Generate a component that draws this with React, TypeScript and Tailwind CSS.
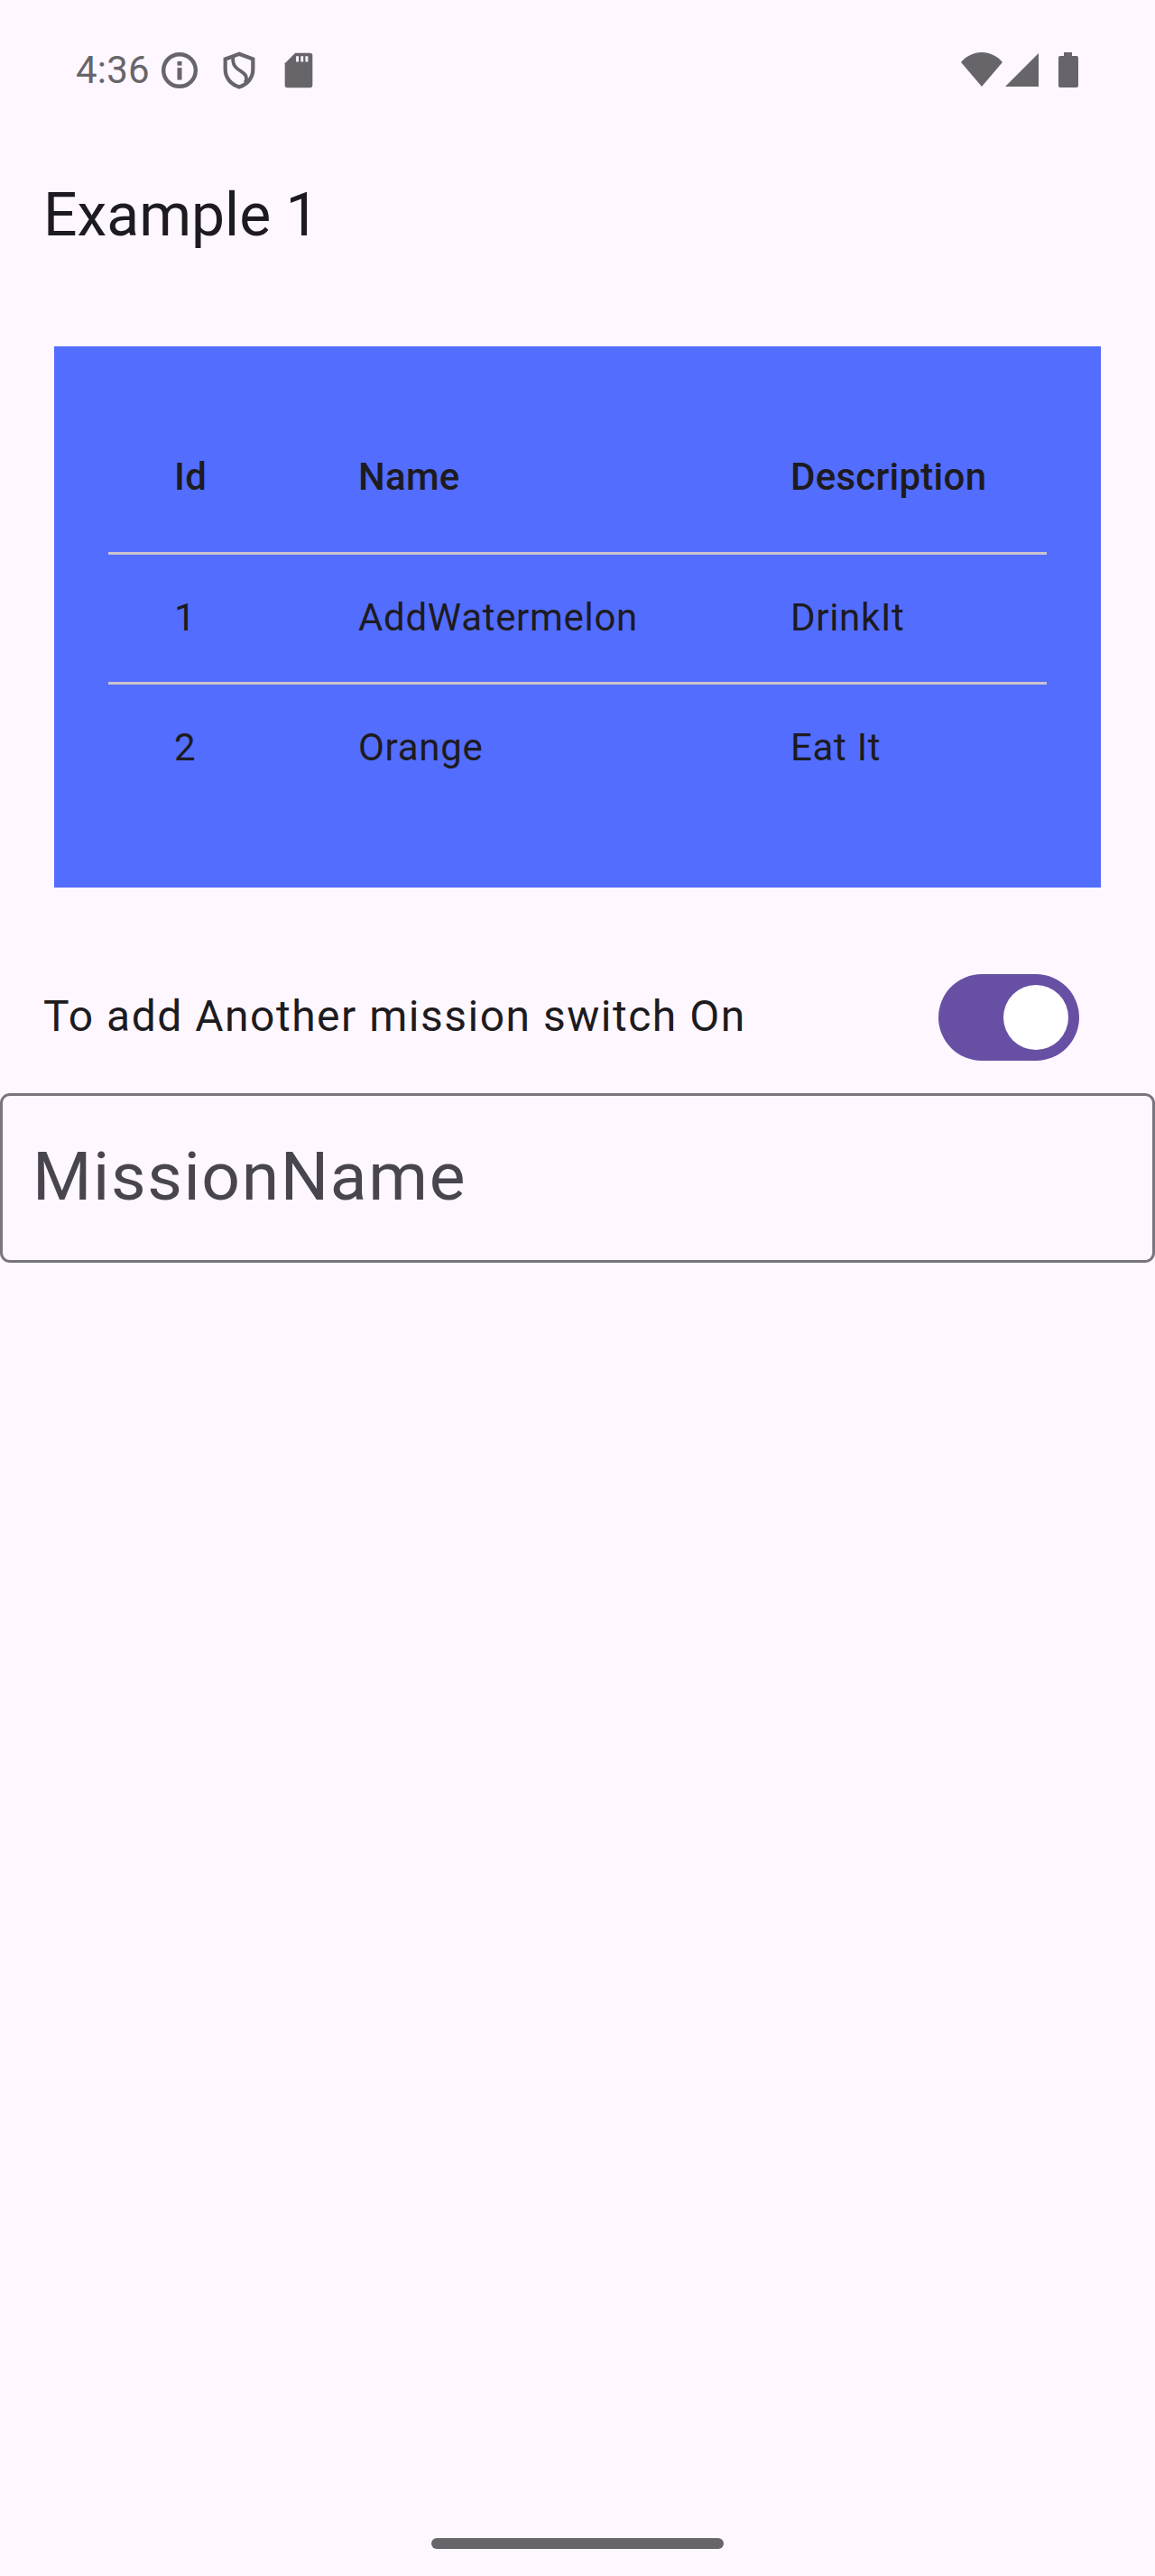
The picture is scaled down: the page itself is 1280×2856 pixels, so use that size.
const Cell = ({ className = "", children }: { className?: string; children: React.ReactNode }) => (
  <div className={className}>{children}</div>
);

const rows = [
  { id: "1", name: "AddWatermelon", description: "DrinkIt" },
  { id: "2", name: "Orange", description: "Eat It" },
];

function StatusBar() {
  return (
    <div className="flex h-[72px] mt-[42px] items-center justify-between pl-[84px] pr-[84px] text-[#67656a]">
      <div className="flex items-center">
        <span className="text-[42px] leading-none w-[92px] tracking-[0.2px]">4:36</span>
        <svg viewBox="0 0 24 24" className="w-[46px] h-[46px]" fill="none">
          <circle cx="12" cy="12" r="9.300" stroke="currentColor" strokeWidth="2.300" />
          <rect x="10.700" y="10.500" width="2.600" height="7" fill="currentColor" />
          <rect x="10.700" y="6.800" width="2.600" height="2.400" fill="currentColor" />
        </svg>
        <svg viewBox="0 0 24 24" className="ml-[20px] w-[46px] h-[46px]" fill="none" stroke="currentColor" strokeWidth="2.200">
          <path d="M12 2.500 20 5.500v6c0 4.800-3.200 8.600-8 10.200-4.800-1.600-8-5.400-8-10.200v-6z" />
          <path d="M8.500 4C8 9 10 10.500 13 12.500c3 2 4 3.500 2.500 6.500" strokeWidth="2" />
        </svg>
        <svg viewBox="0 0 24 24" className="ml-[20px] w-[46px] h-[46px]" fill="currentColor">
          <path d="M10 2h8.500A1.500 1.500 0 0 1 20 3.500v17a1.500 1.500 0 0 1-1.500 1.500h-13A1.500 1.500 0 0 1 4 20.500V8z" />
          <path d="M10.500 3.800h1.500v3.200h-1.500zM13.200 3.800h1.500v3.200h-1.500zM15.900 3.800h1.500v3.200h-1.500z" fill="#fef7ff" />
        </svg>
      </div>
      <div className="flex items-center">
        <svg viewBox="0 0 46 40" className="w-[46px] h-[40px]" fill="currentColor">
          <path d="M0 11C6 4 14 0 23 0s17 4 23 11L23 38z" />
        </svg>
        <svg viewBox="0 0 38 38" className="ml-[3px] w-[38px] h-[38px]" fill="currentColor">
          <path d="M37 0v37H0z" />
        </svg>
        <svg viewBox="0 0 24 40" className="ml-[20px] w-[24px] h-[40px]" fill="currentColor">
          <path d="M7 0h9v4h5a2 2 0 0 1 2 2v31a2 2 0 0 1-2 2H3a2 2 0 0 1-2-2V6a2 2 0 0 1 2-2h4z" />
        </svg>
      </div>
    </div>
  );
}

export default function App() {
  return (
    <div
      className="w-[1280px] h-[2856px] bg-[#fef7ff] flex flex-col text-[#1d1b20] overflow-hidden"
      style={{ fontFamily: "Roboto, sans-serif" }}
    >
      <StatusBar />
      <div className="mt-[84px] pl-[48px] pt-[2px] h-[80px] flex items-center text-[66px] leading-none">Example 1</div>

      {/* Table */}
      <div className="mt-[106px] mx-[60px] h-[600px] bg-[#536dfe] px-[60px] pt-[60px]">
        <div className="h-[171px] border-b-[3px] border-[#cac4d0] flex items-center pl-[73px] text-[42px] font-medium tracking-[0.25px]">
          <Cell className="w-[204px]">Id</Cell>
          <Cell className="w-[479px]">Name</Cell>
          <Cell>Description</Cell>
        </div>
        {rows.map((row, i) => (
          <div
            key={row.id}
            className={`h-[144px] flex items-center pl-[73px] text-[42px] tracking-[0.7px] ${
              i === 0 ? "border-b-[3px] border-[#cac4d0] pb-[3px]" : "pb-[6px]"
            }`}
          >
            <Cell className="w-[204px]">{row.id}</Cell>
            <Cell className="w-[479px]">{row.name}</Cell>
            <Cell>{row.description}</Cell>
          </div>
        ))}
      </div>

      {/* Switch row */}
      <div className="mt-[96px] pl-[48px] pr-[84px] h-[96px] flex items-center justify-between">
        <span className="text-[48px] leading-none tracking-[1.5px] pb-[3px]">To add Another mission switch On</span>
        <div className="relative w-[156px] h-[96px] rounded-full bg-[#6750a4]">
          <div className="absolute right-[12px] top-[12px] w-[72px] h-[72px] rounded-full bg-white" />
        </div>
      </div>

      {/* Text field */}
      <div className="mt-[36px] h-[188px] border-[3px] border-[#79747e] rounded-[11px] flex items-center pl-[33px] pb-[3px] text-[75px] leading-none text-[#49454f] tracking-[1.6px]">
        MissionName
      </div>

      <div className="mt-auto mb-[30px] mx-auto w-[324px] h-[12px] rounded-full bg-[#67656a]" />
    </div>
  );
}
